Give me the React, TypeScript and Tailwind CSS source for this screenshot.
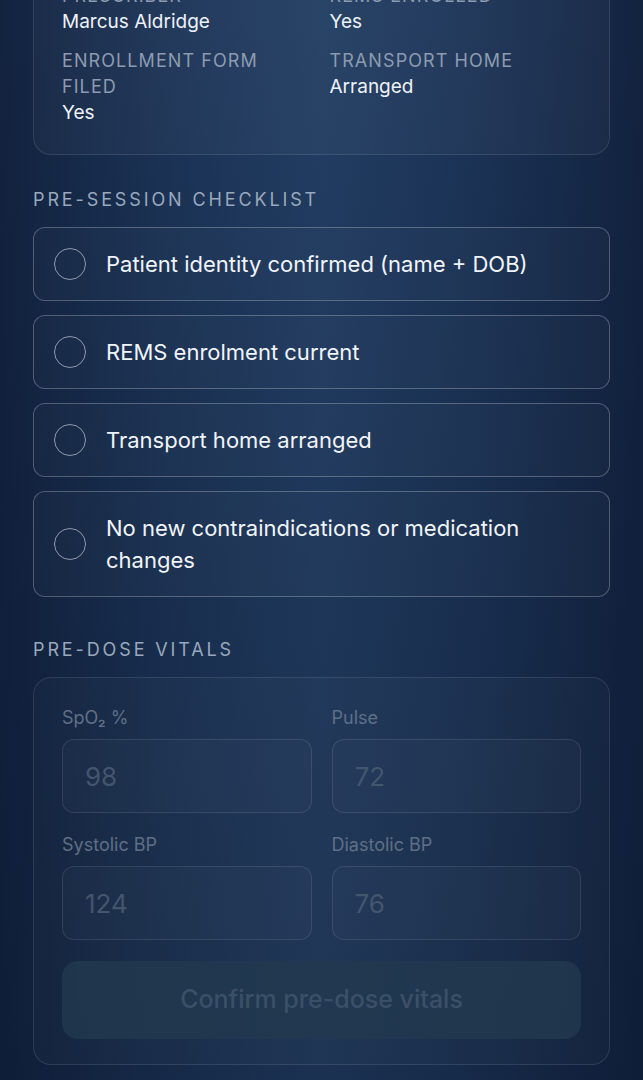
import React from "react";

const info = [
  { label: "PRESCRIBER", value: "Marcus Aldridge" },
  { label: "REMS ENROLLED", value: "Yes" },
  { label: "ENROLLMENT FORM FILED", value: "Yes" },
  { label: "TRANSPORT HOME", value: "Arranged" },
];

const checklist = [
  "Patient identity confirmed (name + DOB)",
  "REMS enrolment current",
  "Transport home arranged",
  "No new contraindications or medication changes",
];

const vitals = [
  { label: "SpO₂ %", value: "98" },
  { label: "Pulse", value: "72" },
  { label: "Systolic BP", value: "124" },
  { label: "Diastolic BP", value: "76" },
];

function SectionTitle({ children }: { children: React.ReactNode }) {
  return (
    <h2 className="px-[33px] text-[18px] leading-[22px] tracking-[0.16em] text-[#9aa8bc]">
      {children}
    </h2>
  );
}

export default function App() {
  return (
    <div
      className="flex h-[1080px] flex-col overflow-hidden bg-[linear-gradient(to_bottom,rgba(0,0,0,0)_0%,rgba(5,12,28,0.25)_100%),linear-gradient(to_right,#122340_0%,#1b3356_25%,#223e63_50%,#1b3356_75%,#122340_100%)] text-white"
      style={{ fontFamily: "Inter, 'Noto Sans', sans-serif" }}
    >
      {/* session details card, scrolled partly off the top */}
      <div className="-mt-[46px] px-[33px]">
        <div className="grid grid-cols-2 gap-x-4 gap-y-[13px] rounded-[18px] border border-white/10 bg-white/[0.03] px-7 pb-7 pt-7">
          {info.map((item) => (
            <div key={item.label}>
              <div className="text-[18px] leading-[26px] tracking-[0.06em] text-[#8d9bb0]">
                {item.label}
              </div>
              <div className="text-[19px] leading-[26px] text-[#eef2f7]">{item.value}</div>
            </div>
          ))}
        </div>
      </div>

      <div className="mt-[34px]">
        <SectionTitle>PRE-SESSION CHECKLIST</SectionTitle>
      </div>
      <div className="mt-4 flex flex-col gap-[14px] px-[33px]">
        {checklist.map((item) => (
          <button
            key={item}
            className="flex items-center gap-5 rounded-[12px] border border-white/25 bg-white/[0.02] py-5 pl-5 pr-6 text-left"
          >
            <span className="h-[32px] w-[32px] shrink-0 rounded-full border-[1.5px] border-[#8e9aab]" />
            <span className="text-[22px] leading-[32px] text-[#f1f4f8]">{item}</span>
          </button>
        ))}
      </div>

      <div className="mt-[42px]">
        <SectionTitle>PRE-DOSE VITALS</SectionTitle>
      </div>
      <div className="mt-4 px-[33px]">
        <div className="rounded-[18px] border border-white/10 bg-white/[0.02] px-7 pb-[25px] pt-[27px]">
          <div className="grid grid-cols-2 gap-x-5 gap-y-[19px]">
            {vitals.map((v) => (
              <div key={v.label}>
                <div className="text-[18px] leading-[26px] text-[#5f6f86]">{v.label}</div>
                <div className="mt-2 flex h-[74px] items-center rounded-[12px] border border-white/10 bg-white/[0.02] px-[22px] text-[26px] text-[#44556e]">
                  {v.value}
                </div>
              </div>
            ))}
          </div>
          <button className="mt-[21px] flex h-[78px] w-full items-center justify-center rounded-[16px] bg-[#22394f]/80 text-[25px] font-medium text-[#3b5068]">
            Confirm pre-dose vitals
          </button>
        </div>
      </div>
    </div>
  );
}
